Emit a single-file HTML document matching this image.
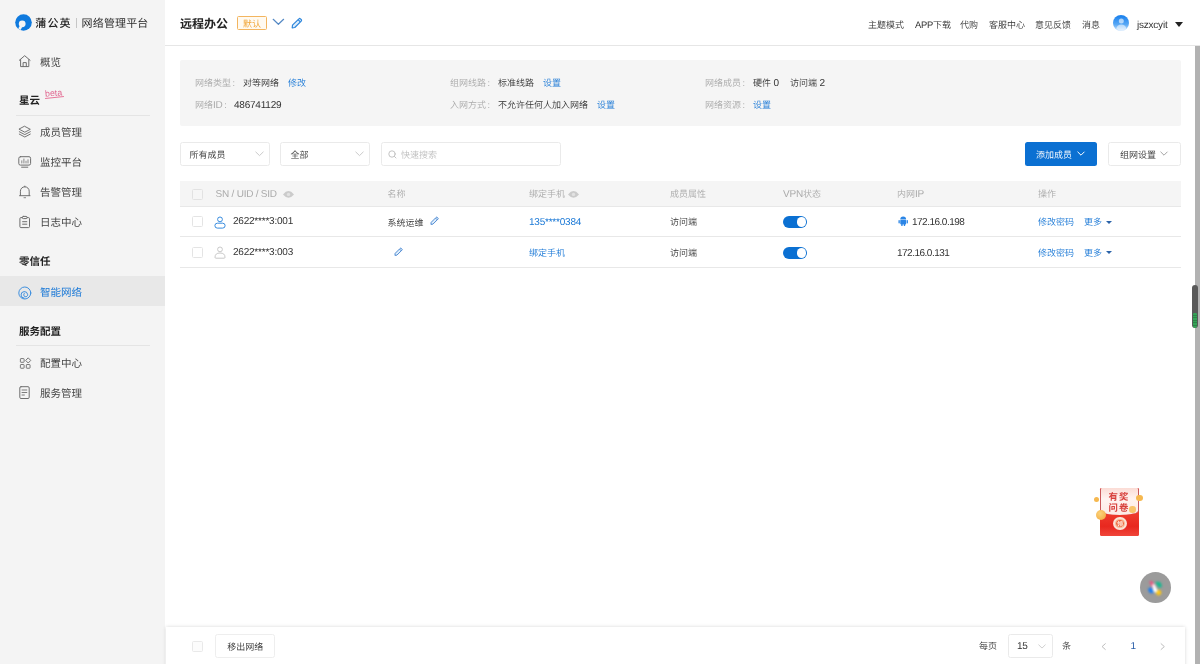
<!DOCTYPE html>
<html lang="zh-CN">
<head>
<meta charset="utf-8">
<title>蒲公英 | 网络管理平台</title>
<style>
*{box-sizing:border-box;margin:0;padding:0}
html,body{width:1200px;height:664px;overflow:hidden;background:#fff}
body{font-family:"Liberation Sans","Noto Sans CJK SC DemiLight","Noto Sans CJK SC",sans-serif;font-size:9px;color:#333;position:relative;text-rendering:geometricPrecision}
.a{position:absolute}
.t{position:absolute;white-space:nowrap;height:20px;line-height:20px}
i{font-style:normal;font-size:10px;letter-spacing:-0.22px}
.g{color:#aaa}
.b{color:#1a78d6}
.side{left:0;top:0;width:165px;height:664px;background:#f4f4f4}
.nav{font-size:10.5px;color:#444;left:40px;font-family:"Liberation Sans","Noto Sans CJK SC",sans-serif}
.bd,.hd{font-family:"Liberation Sans","Noto Sans CJK SC",sans-serif;font-weight:bold}
.hd{font-size:10.5px;color:#222;left:19px}
.ln{height:1px;background:#e4e4e4}
.top{font-size:9px;color:#333;top:15px}
.cb{width:11px;height:11px;border:1px solid #e4e4e4;border-radius:1.5px;background:#fff}
.sel{border:1px solid #eaeaea;border-radius:2.5px;background:#fff;height:24px;top:142px}
svg{position:absolute;overflow:visible}
</style>
</head>
<body>
<div id="pg" class="a" style="left:0;top:0;width:1200px;height:664px;overflow:hidden;will-change:transform">
<!-- sidebar -->
<div class="a side"></div>
<div class="t" style="left:35.2px;top:13.3px;font-size:11px;color:#222;letter-spacing:1.2px;font-family:'Noto Sans CJK SC Medium','Noto Sans CJK SC',sans-serif">蒲公英</div>
<div class="a" style="left:75.5px;top:18px;width:1px;height:9.5px;background:#c6c6c6"></div>
<div class="t" style="left:81.6px;top:13.3px;font-size:11px;color:#2b2b2b;letter-spacing:0.15px;font-family:'Noto Sans CJK SC',sans-serif">网络管理平台</div>

<div class="t nav" style="top:53px">概览</div>
<div class="t hd" style="top:91px">星云</div>
<div class="t" style="left:44.6px;top:83px;font-size:8.8px;color:#e0668f;transform:rotate(-5deg)">beta</div>
<div class="a ln" style="left:16px;top:115px;width:134px"></div>
<div class="t nav" style="top:123px">成员管理</div>
<div class="t nav" style="top:153px">监控平台</div>
<div class="t nav" style="top:183px">告警管理</div>
<div class="t nav" style="top:213px">日志中心</div>
<div class="t hd" style="top:251.5px">零信任</div>
<div class="a" style="left:0;top:276px;width:165px;height:30px;background:#e8e8e8"></div>
<div class="t nav" style="top:283px;color:#1a78d6">智能网络</div>
<div class="t hd" style="top:322px">服务配置</div>
<div class="a ln" style="left:16px;top:345px;width:134px"></div>
<div class="t nav" style="top:354px">配置中心</div>
<div class="t nav" style="top:384px">服务管理</div>

<!-- header -->
<div class="a" style="left:165px;top:45px;width:1035px;height:1px;background:#e6e6e6"></div>
<div class="t bd" style="left:180px;top:14px;font-size:12px;color:#222">远程办公</div>
<div class="a" style="left:237px;top:16px;width:30px;height:14px;border:1px solid #f3b55f;border-radius:1.5px;background:#fffaf1"></div>
<div class="t" style="left:237px;width:30px;text-align:center;top:14px;color:#f0a435">默认</div>

<div class="t top" style="left:868px">主题模式</div>
<div class="t top" style="left:915px"><i style="font-size:9.4px">APP</i>下载</div>
<div class="t top" style="left:960px">代购</div>
<div class="t top" style="left:989px">客服中心</div>
<div class="t top" style="left:1035px">意见反馈</div>
<div class="t top" style="left:1082px">消息</div>
<div class="a" style="left:1112.6px;top:15.4px;width:16px;height:16px;border-radius:50%;background:linear-gradient(#1f84ee 10%,#5aa9f5 60%,#cfe6fd 100%)"></div>
<div class="t top" style="left:1137px"><i>jszxcyit</i></div>
<div class="a" style="left:1174.5px;top:21.5px;border:4.3px solid transparent;border-top:5px solid #222;border-bottom:0"></div>

<!-- info panel -->
<div class="a" style="left:180px;top:60px;width:1001px;height:66px;background:#f5f5f5;border-radius:2px"></div>
<div class="t g" style="left:195px;top:72.5px">网络类型<span style="margin-left:1.6px">:</span></div>
<div class="t" style="left:243px;top:72.5px">对等网络</div>
<div class="t b" style="left:288px;top:72.5px">修改</div>
<div class="t g" style="left:195px;top:94.5px">网络<i>ID</i><span style="margin-left:1.6px">:</span></div>
<div class="t" style="left:234px;top:94.5px"><i>486741129</i></div>

<div class="t g" style="left:450px;top:72.5px">组网线路<span style="margin-left:1.6px">:</span></div>
<div class="t" style="left:498px;top:72.5px">标准线路</div>
<div class="t b" style="left:543px;top:72.5px">设置</div>
<div class="t g" style="left:450px;top:94.5px">入网方式<span style="margin-left:1.6px">:</span></div>
<div class="t" style="left:498px;top:94.5px">不允许任何人加入网络</div>
<div class="t b" style="left:597px;top:94.5px">设置</div>

<div class="t g" style="left:705px;top:72.5px">网络成员<span style="margin-left:1.6px">:</span></div>
<div class="t" style="left:753px;top:72.5px">硬件 <i>0</i></div>
<div class="t" style="left:790px;top:72.5px">访问端 <i>2</i></div>
<div class="t g" style="left:705px;top:94.5px">网络资源<span style="margin-left:1.6px">:</span></div>
<div class="t b" style="left:753px;top:94.5px">设置</div>

<!-- toolbar -->
<div class="a sel" style="left:180px;width:90px"></div>
<div class="t" style="left:189.5px;top:144.7px">所有成员</div>
<div class="a sel" style="left:280px;width:90px"></div>
<div class="t" style="left:290.5px;top:144.7px">全部</div>
<div class="a sel" style="left:381px;width:180px"></div>
<div class="t" style="left:401px;top:144.7px;color:#bdbdbd">快速搜索</div>
<div class="a" style="left:1024.5px;top:142px;width:72.5px;height:24px;background:#0b70d2;border-radius:2.5px"></div>
<div class="t" style="left:1036px;top:144.7px;color:#fff">添加成员</div>
<div class="a sel" style="left:1108px;width:73px"></div>
<div class="t" style="left:1120px;top:144.7px">组网设置</div>

<!-- table -->
<div class="a" style="left:180px;top:181px;width:1001px;height:25px;background:#f5f5f5"></div>
<div class="a ln" style="left:180px;top:206px;width:1001px;background:#e8e8e8"></div>
<div class="a ln" style="left:180px;top:236px;width:1001px;background:#e8e8e8"></div>
<div class="a ln" style="left:180px;top:267px;width:1001px;background:#e8e8e8"></div>
<div class="a cb" style="left:192px;top:188.5px;background:#f6f6f6;border-color:#e2e2e2"></div>
<div class="a cb" style="left:192px;top:216px"></div>
<div class="a cb" style="left:192px;top:246.5px"></div>
<div class="t g" style="left:215.5px;top:184px"><i>SN / UID / SID</i></div>
<div class="t g" style="left:387.5px;top:184px">名称</div>
<div class="t g" style="left:529px;top:184px">绑定手机</div>
<div class="t g" style="left:670px;top:184px">成员属性</div>
<div class="t g" style="left:783px;top:184px"><i>VPN</i>状态</div>
<div class="t g" style="left:897px;top:184px">内网<i>IP</i></div>
<div class="t g" style="left:1038px;top:184px">操作</div>

<div class="t" style="left:233px;top:210.5px"><i>2622****3:001</i></div>
<div class="t" style="left:387.5px;top:213px">系统运维</div>
<div class="t b" style="left:529px;top:212px"><i>135****0384</i></div>
<div class="t" style="left:670px;top:212px">访问端</div>
<div class="t" style="left:912px;top:212px"><i style="letter-spacing:-0.5px">172.16.0.198</i></div>
<div class="t b" style="left:1038px;top:212px">修改密码</div>
<div class="t b" style="left:1084px;top:212px">更多</div>

<div class="t" style="left:233px;top:242px"><i>2622****3:003</i></div>
<div class="t b" style="left:529px;top:242.5px">绑定手机</div>
<div class="t" style="left:670px;top:242.5px">访问端</div>
<div class="t" style="left:897px;top:242.5px"><i style="letter-spacing:-0.5px">172.16.0.131</i></div>
<div class="t b" style="left:1038px;top:242.5px">修改密码</div>
<div class="t b" style="left:1084px;top:242.5px">更多</div>

<!-- bottom bar -->
<div class="a" style="left:165.5px;top:627px;width:1019.5px;height:40px;background:#fff;box-shadow:0 0 3.5px rgba(0,0,0,.16)"></div>
<div class="a cb" style="left:192px;top:640.5px;border-color:#e9e9e9;background:#fcfcfc"></div>
<div class="a" style="left:215px;top:634px;width:59.5px;height:24px;border:1px solid #eee;border-radius:2.5px;background:#fff"></div>
<div class="t" style="left:227.3px;top:636.5px">移出网络</div>
<div class="t" style="left:979px;top:636px">每页</div>
<div class="a" style="left:1008px;top:634px;width:44.5px;height:24px;border:1px solid #eaeaea;border-radius:2.5px;background:#fff"></div>
<div class="t" style="left:1017px;top:636px"><i>15</i></div>
<div class="t" style="left:1062px;top:636px">条</div>
<div class="t" style="left:1130.5px;top:636px;color:#2a5ea8"><i>1</i></div>

<!-- scrollbar -->
<div class="a" style="left:1195px;top:46px;width:5px;height:618px;background:#b2b2b2"></div>
<div class="a" style="left:1192.3px;top:285.3px;width:6.2px;height:43.2px;border-radius:3.1px;background:#595959"></div>
<div class="a" style="left:1193.3px;top:312.5px;width:4.2px;height:15px;border-radius:1.2px 1.2px 2.1px 2.1px;background:repeating-linear-gradient(#35a257 0,#35a257 1.6px,#2b8447 1.6px,#2b8447 2.6px)"></div>

<!-- logo -->
<svg style="left:15.2px;top:14.4px" width="17" height="17" viewBox="0 0 17 17">
<circle cx="8.5" cy="8.5" r="8.3" fill="#0f7ade"/>
<circle cx="7.2" cy="9.8" r="3.4" fill="#f4f4f4"/>
<path d="M5.2 11.2 L3.2 14.6 L5.6 16 L7.4 12.6 Z" fill="#f4f4f4"/>
<circle cx="7.9" cy="9.3" r="1.1" fill="#f4f4f4"/>
</svg>

<!-- sidebar icons -->
<svg style="left:18px;top:54px" width="14" height="14" viewBox="0 0 14 14" fill="none" stroke="#6e6e6e" stroke-width="1" stroke-linejoin="round" stroke-linecap="round">
<path d="M1.3 6.3 L6.7 1.7 L12.1 6.3"/><path d="M2.6 5.6 V12.6 H10.8 V5.6"/><path d="M5.1 12.6 V8.6 H8.3 V12.6"/></svg>

<svg style="left:18px;top:125px" width="14" height="14" viewBox="0 0 14 14" fill="none" stroke="#6e6e6e" stroke-width="0.95" stroke-linejoin="round" stroke-linecap="round">
<path d="M6.8 1.4 L12.3 4.3 L6.8 7.2 L1.3 4.3 Z"/><path d="M1.3 6.7 L6.8 9.6 L12.3 6.7"/><path d="M1.3 9.1 L6.8 12 L12.3 9.1"/></svg>

<svg style="left:18px;top:155px" width="14" height="14" viewBox="0 0 14 14" fill="none" stroke="#6e6e6e" stroke-width="1" stroke-linecap="round">
<rect x="0.8" y="1.7" width="11.8" height="8.4" rx="1.6"/><path d="M3.6 12.2 H9.8"/><path d="M3.8 5.8 V8 M5.9 4 V8 M8 6.2 V8 M10 4.8 V8" stroke-width="0.8"/></svg>

<svg style="left:18px;top:185px" width="14" height="14" viewBox="0 0 14 14" fill="none" stroke="#6e6e6e" stroke-width="1" stroke-linecap="round" stroke-linejoin="round">
<path d="M2.4 10.6 V6.2 A4.4 4.4 0 0 1 11.2 6.2 V10.6"/><path d="M1.6 10.7 H12"/><path d="M6 12.7 H7.6" stroke-width="0.8"/><path d="M6.8 1.1 V1.8"/></svg>

<svg style="left:18px;top:215px" width="14" height="14" viewBox="0 0 14 14" fill="none" stroke="#6e6e6e" stroke-width="1" stroke-linecap="round" stroke-linejoin="round">
<path d="M4.2 2.6 H2.9 Q1.9 2.6 1.9 3.6 V11.6 Q1.9 12.6 2.9 12.6 H10.5 Q11.5 12.6 11.5 11.6 V3.6 Q11.5 2.6 10.5 2.6 H9.2"/><rect x="4.3" y="1.4" width="4.8" height="2.2" rx="1"/><path d="M4.6 6.7 H8.8 M4.6 9.2 H8.8"/></svg>

<svg style="left:18px;top:285.5px" width="14" height="14" viewBox="0 0 14 14" fill="none" stroke="#2d86dc" stroke-width="0.9" stroke-linecap="round">
<circle cx="6.8" cy="7" r="6"/><path d="M6.2 12.2 A3.3 3.3 0 1 1 9.6 8.3 A2 2 0 1 1 6.2 7.4"/></svg>

<svg style="left:18.5px;top:356.6px" width="13" height="13" viewBox="0 0 14 14" fill="none" stroke="#6e6e6e" stroke-width="1" stroke-linejoin="round">
<rect x="1.5" y="1.7" width="4" height="4" rx="0.6"/><rect x="1.5" y="8.1" width="4" height="4" rx="0.6"/><rect x="7.9" y="8.1" width="4" height="4" rx="0.6"/><path d="M9.9 0.9 L12.6 3.7 L9.9 6.5 L7.2 3.7 Z"/></svg>

<svg style="left:18px;top:386px" width="14" height="14" viewBox="0 0 14 14" fill="none" stroke="#6e6e6e" stroke-width="1" stroke-linecap="round">
<rect x="1.8" y="0.7" width="9.4" height="11.8" rx="1.2"/><path d="M4 4 H8.8 M4 6.5 H8.8 M4 9 H6.4" stroke-width="0.9"/></svg>

<!-- beta underline -->
<div class="a" style="left:44.5px;top:97.3px;width:19px;height:1px;background:#e8779b;transform:rotate(-6deg)"></div>

<!-- header icons -->
<svg style="left:272px;top:17px" width="13" height="10" viewBox="0 0 13 10" fill="none" stroke="#5589c4" stroke-width="1.2" stroke-linecap="round" stroke-linejoin="round"><path d="M1.2 2.3 L6.4 7.3 L11.6 2.3"/></svg>
<svg class="pen" style="left:291px;top:17px" width="12" height="12" viewBox="0 0 12 12" fill="#deeefc" stroke="#2d86dc" stroke-width="1.2" stroke-linejoin="round"><path d="M1.5 8.2 L7.9 1.8 A1.1 1.1 0 0 1 9.5 1.8 L10.2 2.5 A1.1 1.1 0 0 1 10.2 4.1 L3.8 10.5 L1.2 10.8 Z"/><path d="M7.1 2.7 L9.3 4.9"/></svg>
<!-- avatar person -->
<svg style="left:1112.6px;top:15.4px" width="16" height="16" viewBox="0 0 16 16"><circle cx="8.3" cy="6" r="2.5" fill="#fff" fill-opacity=".6"/><path d="M3.3 14 Q3.8 9.4 8.3 9.4 Q12.8 9.4 13.3 14 Q8.3 17.4 3.3 14Z" fill="#fff" fill-opacity=".55"/></svg>

<!-- select chevrons -->
<svg style="left:254.5px;top:151px" width="9" height="6" viewBox="0 0 9 6" fill="none" stroke="#c4c4c4" stroke-width="0.9" stroke-linecap="round"><path d="M0.8 1 L4.5 4.6 L8.2 1"/></svg>
<svg style="left:354.5px;top:151px" width="9" height="6" viewBox="0 0 9 6" fill="none" stroke="#c4c4c4" stroke-width="0.9" stroke-linecap="round"><path d="M0.8 1 L4.5 4.6 L8.2 1"/></svg>
<svg style="left:1077px;top:151.3px" width="8" height="6" viewBox="0 0 8 6" fill="none" stroke="#fff" stroke-width="1" stroke-linecap="round"><path d="M0.8 1 L4 4.2 L7.2 1"/></svg>
<svg style="left:1160px;top:151.3px" width="8" height="6" viewBox="0 0 8 6" fill="none" stroke="#999" stroke-width="0.9" stroke-linecap="round"><path d="M0.8 1 L4 4.2 L7.2 1"/></svg>
<svg style="left:1038.2px;top:644.3px" width="8" height="5.3" viewBox="0 0 9 6" fill="none" stroke="#c4c4c4" stroke-width="0.9" stroke-linecap="round"><path d="M0.8 1 L4.5 4.6 L8.2 1"/></svg>
<!-- search icon -->
<svg style="left:387.5px;top:149.5px" width="9" height="9" viewBox="0 0 9 9" fill="none" stroke="#bdbdbd" stroke-width="0.9" stroke-linecap="round"><circle cx="4" cy="4" r="3.2"/><path d="M6.4 6.4 L8 8"/></svg>

<!-- eye icons -->
<svg style="left:283px;top:190px" width="11" height="8" viewBox="0 0 11 8"><path d="M0 4.4 Q5.5 -2.2 11 4.4 Q5.5 11 0 4.4Z" fill="#cbcbcb"/><circle cx="5.5" cy="4.4" r="1.7" fill="#e2e2e2"/></svg>
<svg style="left:568px;top:190px" width="11" height="8" viewBox="0 0 11 8"><path d="M0 4.4 Q5.5 -2.2 11 4.4 Q5.5 11 0 4.4Z" fill="#cbcbcb"/><circle cx="5.5" cy="4.4" r="1.7" fill="#e2e2e2"/></svg>

<!-- user icons -->
<svg style="left:213.5px;top:215.5px" width="12" height="13" viewBox="0 0 12 13" fill="none" stroke="#2d86dc" stroke-width="0.95"><circle cx="6" cy="3.4" r="2.4"/><rect x="0.9" y="7.2" width="10.2" height="4.9" rx="2.45"/></svg>
<svg style="left:213.5px;top:246px" width="12" height="13" viewBox="0 0 12 13" fill="none" stroke="#c2c2c2" stroke-width="0.9"><circle cx="6" cy="3.4" r="2.4"/><path d="M1 11.3 Q1 7 6 7 Q11 7 11 11.3 Q11 12.2 10 12.2 H2 Q1 12.2 1 11.3Z"/></svg>

<!-- row pencils -->
<svg style="left:430.2px;top:216.3px" width="9.3" height="9.3" viewBox="0 0 12 12" fill="#deeefc" stroke="#4583cf" stroke-width="1.2" stroke-linejoin="round"><path d="M1.5 8.2 L7.9 1.8 A1.1 1.1 0 0 1 9.5 1.8 L10.2 2.5 A1.1 1.1 0 0 1 10.2 4.1 L3.8 10.5 L1.2 10.8 Z"/><path d="M7.1 2.7 L9.3 4.9"/></svg>
<svg style="left:394.2px;top:247.3px" width="9.3" height="9.3" viewBox="0 0 12 12" fill="#deeefc" stroke="#4583cf" stroke-width="1.2" stroke-linejoin="round"><path d="M1.5 8.2 L7.9 1.8 A1.1 1.1 0 0 1 9.5 1.8 L10.2 2.5 A1.1 1.1 0 0 1 10.2 4.1 L3.8 10.5 L1.2 10.8 Z"/><path d="M7.1 2.7 L9.3 4.9"/></svg>

<!-- toggles -->
<div class="a" style="left:783px;top:216px;width:24.4px;height:12px;border-radius:6px;background:#0b70d2"></div>
<div class="a" style="left:796.8px;top:217.4px;width:9.2px;height:9.2px;border-radius:50%;background:#fff"></div>
<div class="a" style="left:783px;top:247px;width:24.4px;height:12px;border-radius:6px;background:#0b70d2"></div>
<div class="a" style="left:796.8px;top:248.4px;width:9.2px;height:9.2px;border-radius:50%;background:#fff"></div>

<!-- android -->
<svg style="left:897.6px;top:216.2px" width="10.4" height="10.6" viewBox="0 0 11 11" fill="#2a85e6"><path d="M2.4 3.6 A3.1 3.1 0 0 1 8.6 3.6 Z"/><rect x="2.4" y="4.1" width="6.2" height="4.6" rx="0.6"/><rect x="0.5" y="4.1" width="1.4" height="3.6" rx="0.7"/><rect x="9.1" y="4.1" width="1.4" height="3.6" rx="0.7"/><rect x="3.4" y="8" width="1.5" height="2.6" rx="0.7"/><rect x="6.1" y="8" width="1.5" height="2.6" rx="0.7"/></svg>

<!-- more carets -->
<div class="a" style="left:1106.4px;top:220.5px;border:3.1px solid transparent;border-top:3.9px solid #2b62a8;border-bottom:0"></div>
<div class="a" style="left:1106.4px;top:251px;border:3.1px solid transparent;border-top:3.9px solid #2b62a8;border-bottom:0"></div>

<!-- pagination arrows -->
<svg style="left:1101.3px;top:642.8px" width="5.4" height="7.2" viewBox="0 0 6 8" fill="none" stroke="#b5b5b5" stroke-width="1" stroke-linecap="round"><path d="M4.8 0.8 L1.2 4 L4.8 7.2"/></svg>
<svg style="left:1159.6px;top:642.8px" width="5.4" height="7.2" viewBox="0 0 6 8" fill="none" stroke="#b5b5b5" stroke-width="1" stroke-linecap="round"><path d="M1.2 0.8 L4.8 4 L1.2 7.2"/></svg>

<!-- red envelope -->
<div class="a" style="left:1100px;top:487.5px;width:39px;height:48px;border-radius:1.5px;background:linear-gradient(#f04a3e 0,#ee3a2c 55%,#e8281f 80%,#f0453a 100%)"></div>
<div class="a" style="left:1100px;top:487.5px;width:39px;height:27px;border-radius:1.5px 1.5px 50% 50%/1.5px 1.5px 16% 16%;background:linear-gradient(#fbdcd5 0,#fff3f0 40%,#fdeae6 100%);border-left:1px solid #c9575a;border-right:1px solid #c9575a"></div>
<div class="t" style="left:1099px;width:39px;text-align:center;top:486.2px;font-size:9.4px;font-weight:bold;font-family:'Noto Sans CJK SC',sans-serif;color:#d7403c;letter-spacing:1px;text-indent:1px">有奖</div>
<div class="t" style="left:1099px;width:39px;text-align:center;top:496.8px;font-size:9.4px;font-weight:bold;font-family:'Noto Sans CJK SC',sans-serif;color:#d7403c;letter-spacing:1px;text-indent:1px">问卷</div>
<div class="a" style="left:1093.5px;top:496.5px;width:5.5px;height:5.5px;border-radius:50%;background:#f6b84f"></div>
<div class="a" style="left:1095.5px;top:509.5px;width:10.5px;height:10.5px;border-radius:50%;background:radial-gradient(circle at 40% 35%,#fbd27a,#f2a53a)"></div>
<div class="a" style="left:1136px;top:494.5px;width:6.5px;height:6.5px;border-radius:50%;background:#f6b84f"></div>
<div class="a" style="left:1129px;top:506px;width:6.5px;height:6.5px;border-radius:50%;background:#f8c46a"></div>
<div class="a" style="left:1113.3px;top:517px;width:13.4px;height:13.4px;border-radius:50%;background:#fbe3d6"></div>
<div class="a" style="left:1115.2px;top:518.9px;width:9.6px;height:9.6px;border-radius:50%;background:#f0663f;border:1px solid #f9c9a4"></div>
<div class="t" style="left:1113.3px;width:13.4px;text-align:center;top:513.8px;font-size:6px;font-weight:bold;font-family:'Noto Sans CJK SC',sans-serif;color:#fff3e6">领</div>

<!-- assistant ball -->
<div class="a" style="left:1139.5px;top:572.3px;width:31px;height:31px;border-radius:50%;background:#9b9b9b"></div>
<div class="a" style="left:1143.6px;top:576.6px;width:20px;height:20px;filter:blur(0.9px);transform:scale(1.15);transform-origin:0 0">
<svg style="left:0;top:0" width="20" height="20" viewBox="0 0 20 20">
<path d="M4.6 4.2 Q6.4 2.6 7.6 4.6 L10 8.6 L7.2 9.6 Z" fill="#ee4f7e"/>
<path d="M9.6 4.4 Q15.4 3 15.4 8 Q15 9.6 12.6 9.2 Z" fill="#17b890"/>
<path d="M3.8 9.8 Q3 14.4 7.4 14.2 L8.6 13.4 L6.4 9 Z" fill="#1a7df0"/>
<path d="M10.4 11.4 L13.6 11 Q16.4 13.4 14 15.6 Q11.4 16.8 10.6 14.4 Z" fill="#fbc717"/>
<path d="M7 6.6 L9 6 L12 12 L10 13.6 L8.2 12.6 Z" fill="#fff"/>
</svg></div>
</div>
</body>
</html>
